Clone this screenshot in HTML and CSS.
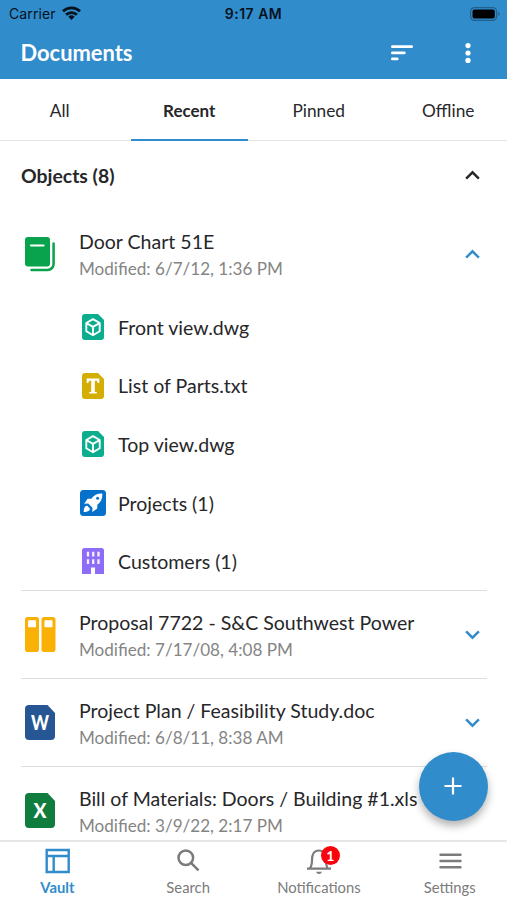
FILE: index.html
```html
<!DOCTYPE html>
<html lang="en">
<head>
<meta charset="utf-8">
<title>Documents</title>
<link rel="stylesheet" href="styles.css">
</head>
<body>
<svg width="0" height="0" class="defs">
  <symbol id="up" viewBox="0 0 16 16"><path d="M2 11l6-6 6 6" fill="none" stroke="currentColor" stroke-width="2.3"/></symbol>
  <symbol id="down" viewBox="0 0 16 16"><path d="M2 5l6 6 6-6" fill="none" stroke="currentColor" stroke-width="2.3"/></symbol>
  <symbol id="dwg" viewBox="0 0 22 26"><path d="M3 0h13l6 6v17a3 3 0 0 1-3 3H3a3 3 0 0 1-3-3V3a3 3 0 0 1 3-3z" fill="#0aad8e"/><path d="M11 5.2l6.7 3.8v8.2L11 21.2l-6.7-4V9zM4.3 9l6.7 3.9L17.7 9M11 12.9v8.3" fill="none" stroke="#fff" stroke-width="1.9" stroke-linejoin="round"/></symbol>
</svg>
<div class="app">
  <header>
    <div class="status">
      <div class="carrier">Carrier
        <svg width="19" height="14" viewBox="0 0 19 14"><g fill="none" stroke="#06121c" stroke-width="2.8"><path d="M1 5.3a12.2 12.2 0 0 1 17 0"/><path d="M4.1 8.7a7.8 7.8 0 0 1 10.8 0"/></g><path d="M6.4 10.7a4.5 4.5 0 0 1 6.2 0L9.5 14z" fill="#06121c"/></svg>
      </div>
      <div class="time">9:17 AM</div>
      <svg class="battery" width="30" height="14" viewBox="0 0 30 14"><rect x=".6" y=".6" width="26" height="12.8" rx="4" fill="none" stroke="#235f8b" stroke-width="1.2"/><rect x="2.5" y="2.5" width="22.3" height="9" rx="2" fill="#000"/><path d="M28.2 4.8v4.4q1.4-.6 1.4-2.2t-1.4-2.2z" fill="#235f8b"/></svg>
    </div>
    <div class="bar">
      <h1>Documents</h1>
      <svg class="sort" width="22" height="16" viewBox="0 0 22 16"><path d="M1.4 1.7h19.2M1.4 7.9h11.9M1.4 13.9h4.8" stroke="#fff" stroke-width="2.8" stroke-linecap="round"/></svg>
      <svg width="6" height="20" viewBox="0 0 6 20"><g fill="#fff"><circle cx="3" cy="2.6" r="2.6"/><circle cx="3" cy="10" r="2.6"/><circle cx="3" cy="17.4" r="2.6"/></g></svg>
    </div>
  </header>
  <div class="tabs">
    <div class="tab">All</div><div class="tab on">Recent</div><div class="tab">Pinned</div><div class="tab">Offline</div>
  </div>
  <main>
    <div class="section"><h2>Objects (8)</h2><svg class="chev"><use href="#up"/></svg></div>
    <div class="row">
      <svg class="icon" width="31" height="35" viewBox="0 0 31 35"><rect x="0" y="0" width="25" height="29.5" rx="3" fill="#08a34c"/><path d="M6 8.5h12.500" stroke="#fff" stroke-width="2.2" stroke-linecap="round"/><path d="M28.6 6.5v20.500a6 6 0 0 1-6 6H6.500" fill="none" stroke="#08a34c" stroke-width="2.5" stroke-linecap="round"/></svg>
      <div class="text"><div class="name">Door Chart 51E</div><div class="date">Modified: 6/7/12, 1:36 PM</div></div>
      <svg class="chev blue"><use href="#up"/></svg>
    </div>
    <div class="sub"><svg width="22" height="26"><use href="#dwg"/></svg>Front view.dwg</div>
    <div class="sub"><svg width="22" height="26" viewBox="0 0 22 26"><path d="M3 0h13l6 6v17a3 3 0 0 1-3 3H3a3 3 0 0 1-3-3V3a3 3 0 0 1 3-3z" fill="#d4ae04"/><path d="M4.700 5.500h12.600v4.600h-1.600l-.8-2.300h-2.100v11l2.100.4v1.300H7.100v-1.300l2.100-.4v-11H7.100l-.8 2.300H4.700z" fill="#fff"/></svg>List of Parts.txt</div>
    <div class="sub"><svg width="22" height="26"><use href="#dwg"/></svg>Top view.dwg</div>
    <div class="sub"><svg width="26" height="26" viewBox="0 0 26 26"><rect width="26" height="26" rx="3.5" fill="#0571cb"/><path d="M22.3 3.5c-5-.2-8.300 1.600-11 5.200H7.600l-3.400 5 4-.2 4.300 4.300-.2 4.200 5-3.500v-3.800c3.600-2.700 5.300-6 5-11.200z" fill="#fff"/><path d="M7.200 15.700c-2.600.2-3.400 2.400-3.500 6.200 3.600 0 6-.8 6.200-3.500z" fill="#fff"/><circle cx="17.600" cy="8.300" r="1.500" fill="#0571cb"/></svg>Projects (1)</div>
    <div class="sub"><svg width="22" height="26" viewBox="0 0 22 26"><path d="M2.500 0h17A2.500 2.500 0 0 1 22 2.500V26h-9v-6.500H9V26H0V2.500A2.500 2.500 0 0 1 2.500 0z" fill="#8d6cf8"/><path d="M6 3.800v4.800M11.200 3.800v4.800M16.500 3.800v4.800M6 11.200v4.800M11.200 11.200v4.800M16.500 11.200v4.800" stroke="#f4f0ff" stroke-width="2.3"/></svg>Customers (1)</div>
    <div class="row line">
      <svg class="icon" width="31" height="35" viewBox="0 0 31 35"><rect x="0" y="0" width="14" height="35" rx="2.8" fill="#f8b104"/><rect x="16.5" y="0" width="14" height="35" rx="2.8" fill="#f8b104"/><rect x="3" y="3.2" width="8" height="7" rx=".8" fill="#fff"/><rect x="19.5" y="3.2" width="8" height="7" rx=".8" fill="#fff"/></svg>
      <div class="text"><div class="name">Proposal 7722 - S&amp;C Southwest Power</div><div class="date">Modified: 7/17/08, 4:08 PM</div></div>
      <svg class="chev blue"><use href="#down"/></svg>
    </div>
    <div class="row line">
      <svg class="icon" width="31" height="35" viewBox="0 0 31 35"><path d="M4 0h18.500l7.500 8v23a4 4 0 0 1-4 4H4a4 4 0 0 1-4-4V4a4 4 0 0 1 4-4z" fill="#275694"/><text x="15" y="24.8" class="letter" textLength="18" lengthAdjust="spacingAndGlyphs">W</text></svg>
      <div class="text"><div class="name">Project Plan / Feasibility Study.doc</div><div class="date">Modified: 6/8/11, 8:38 AM</div></div>
      <svg class="chev blue"><use href="#down"/></svg>
    </div>
    <div class="row line">
      <svg class="icon" width="31" height="35" viewBox="0 0 31 35"><path d="M4 0h18.500l7.500 8v23a4 4 0 0 1-4 4H4a4 4 0 0 1-4-4V4a4 4 0 0 1 4-4z" fill="#107c3e"/><text x="15" y="24.8" class="letter" textLength="13" lengthAdjust="spacingAndGlyphs">X</text></svg>
      <div class="text"><div class="name">Bill of Materials: Doors / Building #1.xls</div><div class="date">Modified: 3/9/22, 2:17 PM</div></div>
    </div>
  </main>
  <div class="fab"><svg width="18" height="18" viewBox="0 0 18 18"><path d="M9 .5v17M.5 9h17" stroke="#fff" stroke-width="2.2"/></svg></div>
  <nav>
    <div class="item active"><svg width="26" height="26" viewBox="0 0 26 26"><path d="M2 2h22v22H2zM2 8h22M9 8v16" transform="translate(.7 0)" fill="none" stroke="currentColor" stroke-width="2.4"/></svg>Vault</div>
    <div class="item"><svg width="26" height="26" viewBox="0 0 26 26"><g fill="none" stroke="currentColor" stroke-width="2.5"><circle cx="10.8" cy="9.700" r="7.300"/><path d="M15.8 14.700l7.700 7.700"/></g></svg>Search</div>
    <div class="item"><div class="bell"><svg width="26" height="26" viewBox="0 0 26 26"><path d="M1 20.700h24M3.700 20.500c1.700-2 2.300-4 2.300-8.500C6 6.500 8 2.500 13 2.500s7 4 7 9.500c0 4.500.6 6.500 1.600 8.500" fill="none" stroke="currentColor" stroke-width="2.200"/><path d="M10 23.700h6q-.8 2.300-3 2.300t-3-2.300z" fill="currentColor"/></svg><span class="badge">1</span></div>Notifications</div>
    <div class="item"><svg width="26" height="26" viewBox="0 0 26 26"><path d="M3.500 6.800h20M3.500 13h20M3.500 19.200h20" stroke="currentColor" stroke-width="2.4" stroke-linecap="round"/></svg>Settings</div>
  </nav>
</div>
</body>
</html>
```
FILE: styles.css
```css
* { box-sizing: border-box; }
body { margin: 0; background: #fff; font-family: Lato, sans-serif; color: #27272a; }
h1, h2 { margin: 0; }
svg { flex: none; display: block; }
.defs { position: absolute; }
.app { position: relative; width: 507px; height: 900px; overflow: hidden; display: flex; flex-direction: column; }
header { height: 79px; flex: none; background: #318ccc; }
.status { height: 27px; padding: 0 7px 0 9px; display: grid; grid-template-columns: 1fr auto 1fr; align-items: center; font-family: Inter, sans-serif; font-size: 14px; color: #06121c; }
.carrier { display: flex; align-items: center; gap: 6px; letter-spacing: .1px; }
.carrier svg { margin-top: -2px; }
.time { font-weight: 600; letter-spacing: .5px; margin-right: 2px; }
.battery { justify-self: end; }
.bar { height: 52px; padding: 0 36px 0 20.500px; display: flex; align-items: center; }
.bar h1 { flex: 1; font-size: 21.900px; line-height: 28px; color: #fff; font-weight: 700; }
.sort { margin-right: 52px; }
.tabs { height: 62px; flex: none; display: flex; gap: 12px; padding-left: 1px; border-bottom: 1px solid #e3e3e3; }
.tab { flex: 1; height: 62px; display: flex; align-items: center; justify-content: center; font-size: 17.300px; padding-top: 2px; border-bottom: 2px solid transparent; }
.tab.on { font-size: 17px; font-weight: 700; border-color: #318ccc; }
main { flex: 1; min-height: 0; overflow: hidden; padding: 0 20px 0 21px; }
.section { height: 69px; display: flex; align-items: center; justify-content: space-between; padding-right: 6px; }
.section h2 { font-size: 19.400px; font-weight: 700; }
.chev { width: 17px; height: 17px; }
.blue { color: #318ccc; }
.row { height: 88px; display: flex; align-items: center; padding: 0 6px 0 4px; }
.line { border-top: 1px solid #dedede; }
.icon { margin-right: 23px; }
.text { flex: 1; white-space: nowrap; padding-top: 4px; }
.section + .row .text { padding-top: 2px; }
.name { font-size: 19.550px; line-height: 27px; }
.date { font-size: 17.100px; line-height: 26px; margin-top: 1px; color: #858585; }
.sub { height: 58.600px; display: flex; align-items: center; padding-left: 61px; font-size: 19.550px; }
.sub:has(+ .line) { height: 57.600px; }
.sub svg { margin-right: 14px; }
.sub svg[width="26"] { margin: 0 12px 0 -2px; }
.letter { font: 900 20px Lato, sans-serif; fill: #fff; text-anchor: middle; }
.fab { position: absolute; left: 419px; top: 752px; width: 69px; height: 69px; border-radius: 50%; background: #318ccc; box-shadow: 0 5px 9px rgba(0,0,0,.3); display: flex; align-items: center; justify-content: center; padding: 0 1px 1px 0; }
nav { height: 60px; flex: none; margin: 0 -8px; display: flex; border-top: 2px solid #e6e6e6; background: #fff; }
.item { flex: 1; display: flex; flex-direction: column; align-items: center; padding-top: 6px; font-size: 14.800px; line-height: 18px; color: #7b7b7b; gap: 4px; }
.active { color: #318ccc; font-weight: 700; }
.bell { position: relative; }
.badge { position: absolute; left: 15px; top: -2px; width: 19px; height: 19px; border-radius: 50%; background: #f9040c; color: #fff; font-size: 14px; line-height: 19px; font-weight: 700; text-align: center; }
```
